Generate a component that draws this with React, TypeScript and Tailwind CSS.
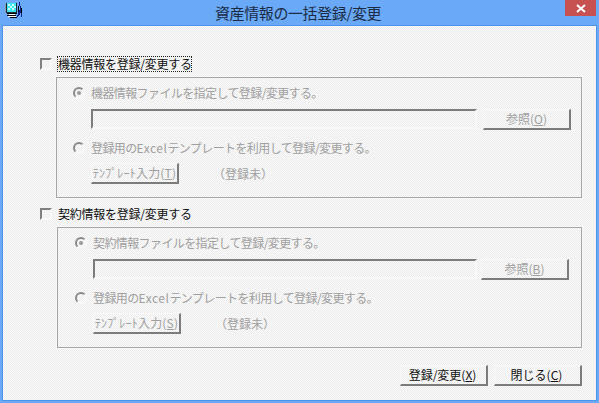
const FONT = "font-['Noto_Sans_CJK_JP','Noto_Sans_CJK_SC',sans-serif]";
const DITHER = "bg-[repeating-conic-gradient(#ececec_0%_25%,#fafafa_0%_50%)] bg-[length:2px_2px]";

function AppIcon() {
  return (
    <svg width="18" height="17" viewBox="0 0 18 17" shapeRendering="crispEdges" className="block">
      <rect x="1" y="1" width="11" height="10" fill="#1c2a3c" />
      <rect x="2" y="1" width="9" height="9" fill="#3fe3ea" />
      <path d="M3 2h2v2H3zM7 2h2v2H7zM5 4h2v2H5zM9 4h2v2H9zM3 6h2v2H3zM7 6h2v2H7z" fill="#c8ffff" />
      <rect x="0" y="2" width="1" height="9" fill="#8a9aa8" />
      <rect x="2" y="11" width="10" height="1" fill="#000000" />
      <rect x="4" y="12" width="6" height="1" fill="#ffffff" />
      <rect x="2" y="13" width="9" height="1" fill="#000000" />
      <rect x="3" y="14" width="8" height="1" fill="#ffffff" />
      <rect x="5" y="15" width="7" height="1" fill="#000000" />
      <path d="M14 0h1v4h-1zM15 4h1v7h-1zM14 8h1v5h-1zM13 10h1v4h-1zM16 11h1v4h-1zM12 13h1v2h-1z" fill="#0a1e8c" />
      <path d="M13 4h1v6h-1zM16 6h1v5h-1z" fill="#000000" />
    </svg>
  );
}

function CheckBox() {
  return (
    <div className="w-3 h-3 shrink-0 border-2 border-t-[#808080] border-l-[#808080] border-r-[#f8f8f8] border-b-[#f8f8f8] bg-[#f2f2f2]" />
  );
}

function Radio({ on }: { on?: boolean }) {
  return (
    <div className="w-3 h-3 shrink-0 rounded-full border-2 border-t-[#8a8a8a] border-l-[#8a8a8a] border-r-[#f8f8f8] border-b-[#f8f8f8] flex items-center justify-center">
      {on && <div className="w-1 h-1 rounded-full bg-[#9a9a9a]" />}
    </div>
  );
}

function Btn({ children, dis }: { children: React.ReactNode; dis?: boolean }) {
  return (
    <div
      className={`h-[21px] w-[88px] shrink-0 flex items-center justify-center text-[12px] leading-none whitespace-nowrap border-t border-l border-t-[#f8f8f8] border-l-[#f8f8f8] border-r-2 border-b-2 border-r-[#7c7c7c] border-b-[#7c7c7c] ${
        dis ? "text-[#a0a0a0]" : "text-[#111111]"
      }`}
    >
      {children}
    </div>
  );
}

function RadioRow({ on, children }: { on?: boolean; children: React.ReactNode }) {
  return (
    <div className="h-4 flex items-center gap-[6px]">
      <Radio on={on} />
      <span className="text-[12px] leading-none tracking-[-0.6px] text-[#a0a0a0] whitespace-nowrap">{children}</span>
    </div>
  );
}

function Section({
  second,
  title,
  file,
  browseKey,
  tplKey,
}: {
  second?: boolean;
  title: string;
  file: string;
  browseKey: string;
  tplKey: string;
}) {
  return (
    <section className={second ? "mt-2" : ""}>
      <div className="h-4 flex items-center pl-[37px]">
        <CheckBox />
        <span
          className={`ml-[5px] h-4 w-[135px] pl-px flex items-center text-[12px] leading-none tracking-[-0.25px] text-[#111111] whitespace-nowrap ${
            second ? "" : "outline outline-1 -outline-offset-1 outline-dotted outline-[#222222]"
          }`}
        >
          {title}
        </span>
      </div>
      <div
        className={`mt-[5px] h-[121px] border border-[#a6a6a6] outline outline-1 outline-[#f8f8f8] flex flex-col pt-[7px] ${
          second ? "ml-[54px] w-[525px] pl-[17px]" : "ml-[53px] w-[526px] pl-[16px]"
        }`}
      >
        <RadioRow on>{file}</RadioRow>
        <div className="mt-2 flex items-start pl-[18px]">
          <div
            className={`h-5 shrink-0 border-t-2 border-l-2 border-t-[#7c7c7c] border-l-[#7c7c7c] border-b-2 border-r-2 border-b-[#f8f8f8] border-r-[#f8f8f8] ${
              second ? "w-[384px]" : "w-[386px]"
            }`}
          />
          <div className={second ? "ml-1" : "ml-[6px]"}>
            <Btn dis>
              <span>
                参照(<u>{browseKey}</u>)
              </span>
            </Btn>
          </div>
        </div>
        <div className="mt-[10px]">
          <RadioRow>
            登録用の<span className="tracking-[0.5px]">Excel</span>テンプレートを利用して登録/変更する。
          </RadioRow>
        </div>
        <div className="mt-[7px] pl-[18px] flex items-center">
          <Btn dis>
            <span className="tracking-[0.2px]">
              ﾃﾝﾌﾟﾚｰﾄ入力(<u>{tplKey}</u>)
            </span>
          </Btn>
          <span className="ml-[34px] text-[12px] leading-none text-[#a0a0a0]">（登録未）</span>
        </div>
      </div>
    </section>
  );
}

export default function App() {
  return (
    <div className={`w-[599px] h-[403px] overflow-hidden bg-[#69a9f6] flex flex-col px-[2px] pb-[2px] ${FONT}`}>
      <header className="relative h-[25px] shrink-0 flex items-start">
        <div className="ml-[3px] mt-[2px]">
          <AppIcon />
        </div>
        <div className="absolute left-[213px] top-[2px] text-[15px] leading-[21px] tracking-[-0.4px] text-[#1c2b45] whitespace-nowrap">
          資産情報の一括登録/変更
        </div>
        <div className="absolute right-[1px] top-0 w-[31px] h-4 bg-[#c75050] flex items-center justify-center">
          <svg width="10" height="9" viewBox="0 0 10 9">
            <path d="M1 1l8 7M9 1L1 8" stroke="#ffffff" strokeWidth="2" fill="none" />
          </svg>
        </div>
      </header>
      <main className={`flex-1 border border-[#4f94ea] pt-[30px] flex flex-col ${DITHER}`}>
        <Section
          title="機器情報を登録/変更する"
          file="機器情報ファイルを指定して登録/変更する。"
          browseKey="O"
          tplKey="T"
        />
        <Section
          second
          title="契約情報を登録/変更する"
          file="契約情報ファイルを指定して登録/変更する。"
          browseKey="B"
          tplKey="S"
        />
        <div className="mt-[17px] flex justify-end gap-[6px] pr-[14px]">
          <Btn>
            <span className="mr-[2px]">
              登録/変更(<u>X</u>)
            </span>
          </Btn>
          <Btn>
            <span className="mr-[2px]">
              閉じる(<u>C</u>)
            </span>
          </Btn>
        </div>
      </main>
    </div>
  );
}
